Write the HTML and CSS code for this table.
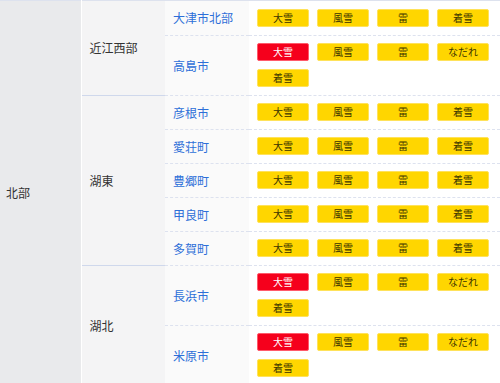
FILE: index.html
```html
<!DOCTYPE html>
<html lang="ja">
<head>
<meta charset="utf-8">
<link rel="stylesheet" href="styles.css">
</head>
<body>
<table class="warn">
  <tbody>
    <tr class="grp-start">
      <td class="area" rowspan="9">北部</td>
      <td class="sub" rowspan="2">近江西部</td>
      <td class="city">大津市北部</td>
      <td class="tags"><span class="tag">大雪</span><span class="tag">風雪</span><span class="tag">雷</span><span class="tag">着雪</span></td>
    </tr>
    <tr>
      <td class="city">高島市</td>
      <td class="tags"><span class="tag red">大雪</span><span class="tag">風雪</span><span class="tag">雷</span><span class="tag">なだれ</span><span class="tag">着雪</span></td>
    </tr>
    <tr class="grp-start">
      <td class="sub" rowspan="5">湖東</td>
      <td class="city">彦根市</td>
      <td class="tags"><span class="tag">大雪</span><span class="tag">風雪</span><span class="tag">雷</span><span class="tag">着雪</span></td>
    </tr>
    <tr>
      <td class="city">愛荘町</td>
      <td class="tags"><span class="tag">大雪</span><span class="tag">風雪</span><span class="tag">雷</span><span class="tag">着雪</span></td>
    </tr>
    <tr>
      <td class="city">豊郷町</td>
      <td class="tags"><span class="tag">大雪</span><span class="tag">風雪</span><span class="tag">雷</span><span class="tag">着雪</span></td>
    </tr>
    <tr>
      <td class="city">甲良町</td>
      <td class="tags"><span class="tag">大雪</span><span class="tag">風雪</span><span class="tag">雷</span><span class="tag">着雪</span></td>
    </tr>
    <tr>
      <td class="city">多賀町</td>
      <td class="tags"><span class="tag">大雪</span><span class="tag">風雪</span><span class="tag">雷</span><span class="tag">着雪</span></td>
    </tr>
    <tr class="grp-start">
      <td class="sub" rowspan="2">湖北</td>
      <td class="city">長浜市</td>
      <td class="tags"><span class="tag red">大雪</span><span class="tag">風雪</span><span class="tag">雷</span><span class="tag">なだれ</span><span class="tag">着雪</span></td>
    </tr>
    <tr>
      <td class="city">米原市</td>
      <td class="tags"><span class="tag red">大雪</span><span class="tag">風雪</span><span class="tag">雷</span><span class="tag">なだれ</span><span class="tag">着雪</span></td>
    </tr>
  </tbody>
</table>
</body>
</html>
```
FILE: styles.css
```css
html, body {
  margin: 0;
  padding: 0;
  background: #ffffff;
}
body {
  font-family: "Noto Sans CJK JP", "Noto Sans", sans-serif;
  font-size: 12px;
  line-height: 16px;
  color: #333333;
}
.warn {
  border-collapse: collapse;
  width: 500px;
  table-layout: fixed;
  border-top: 1px solid #dde2ee;
}
.warn td {
  padding: 0;
  vertical-align: middle;
}
.area {
  width: 81px;
  background: #e9eaec;
  border-right: 1px solid #ffffff;
  padding-left: 6px !important;
  box-sizing: border-box;
}
.sub {
  width: 84px;
  background: #f4f4f5;
  padding-left: 8px !important;
  box-sizing: border-box;
}
.city {
  width: 84px;
  background: #fafafa;
  color: #2d6fd8;
  padding-left: 8px !important;
  box-sizing: border-box;
  border-top: 1px dashed #dde2ef;
}
.tags {
  padding: 7px 4px 8px 8px !important;
  border-top: 1px dashed #dde2ef;
  line-height: 0;
}
.grp-start .sub {
  border-top: 1px solid #cfd8ec;
}
.warn tr:first-child td {
  border-top: none;
}
.warn tr:first-child .tags {
  padding-top: 8px !important;
}
.tag {
  display: inline-block;
  box-sizing: border-box;
  width: 52px;
  height: 18px;
  margin: 0 8px 0 0;
  background: #ffd600;
  border: 1px solid #ffe25a;
  border-radius: 2px;
  color: #3a3300;
  font-size: 10px;
  line-height: 16px;
  text-align: center;
  vertical-align: top;
}
.tag:nth-child(4n) {
  margin-right: 0;
}
.tags .tag:nth-child(n+5) {
  margin-top: 8px;
}
.tag.red {
  background: #f5001c;
  border-color: #ff5a6a;
  color: #ffffff;
}
```
